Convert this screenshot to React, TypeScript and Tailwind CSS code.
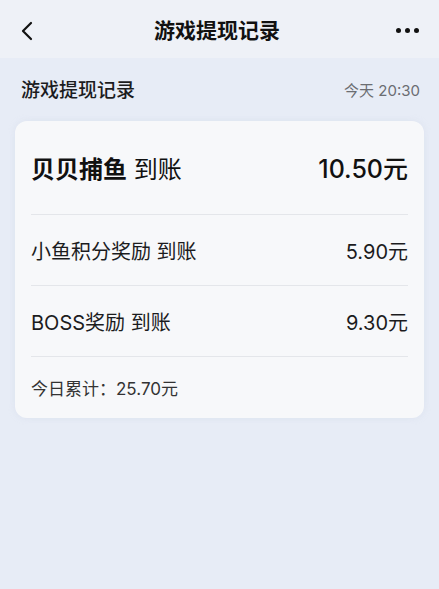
const font = { fontFamily: 'Inter, "Noto Sans CJK SC", sans-serif' };

const Row = ({ label, amount }: { label: string; amount: string }) => (
  <div className="flex h-[71px] items-center justify-between border-t border-[#e4e6ea] pt-[4px]">
    <span className="text-[20px] text-[#1c1c1e]">{label}</span>
    <span className="text-[20px] text-[#1c1c1e]">{amount}</span>
  </div>
);

export default function App() {
  return (
    <div style={font} className="flex min-h-[589px] flex-col bg-[#e7ecf6]">
      {/* nav bar */}
      <div className="flex h-[58px] items-center justify-between bg-[#eef1f7] px-4 pt-[3px]">
        <svg width="20" height="22" viewBox="0 0 20 22" className="ml-0.5">
          <path d="M13 3 L5 11 L13 19" fill="none" stroke="#111" strokeWidth="2.2" strokeLinecap="round" strokeLinejoin="round" />
        </svg>
        <span className="text-[21px] font-bold text-[#111]">游戏提现记录</span>
        <div className="mr-1 flex gap-[4px]">
          <span className="size-[5px] rounded-full bg-[#111]" />
          <span className="size-[5px] rounded-full bg-[#111]" />
          <span className="size-[5px] rounded-full bg-[#111]" />
        </div>
      </div>

      <div className="flex h-[63px] items-center justify-between pl-[21px] pr-[19px] pt-[3px]">
        <span className="text-[19px] font-medium text-[#1c1c1e]">游戏提现记录</span>
        <span className="text-[15px] text-[#6b6d72]">今天 20:30</span>
      </div>

      <div className="mx-[15px] rounded-xl bg-[#f7f8fa] px-4 shadow-[0_0_6px_rgba(200,210,225,0.35)]">
        <div className="flex h-[93px] items-center justify-between pt-[5px]">
          <span className="text-[24px] text-[#111]">
            <span className="font-bold">贝贝捕鱼</span> 到账
          </span>
          <span className="text-[25px] font-medium text-[#111]">10.50元</span>
        </div>
        <Row label="小鱼积分奖励 到账" amount="5.90元" />
        <Row label="BOSS奖励 到账" amount="9.30元" />
        <div className="flex h-[62px] items-center border-t border-[#e4e6ea] pt-[4px]">
          <span className="text-[17px] text-[#333]">今日累计：25.70元</span>
        </div>
      </div>
    </div>
  );
}
